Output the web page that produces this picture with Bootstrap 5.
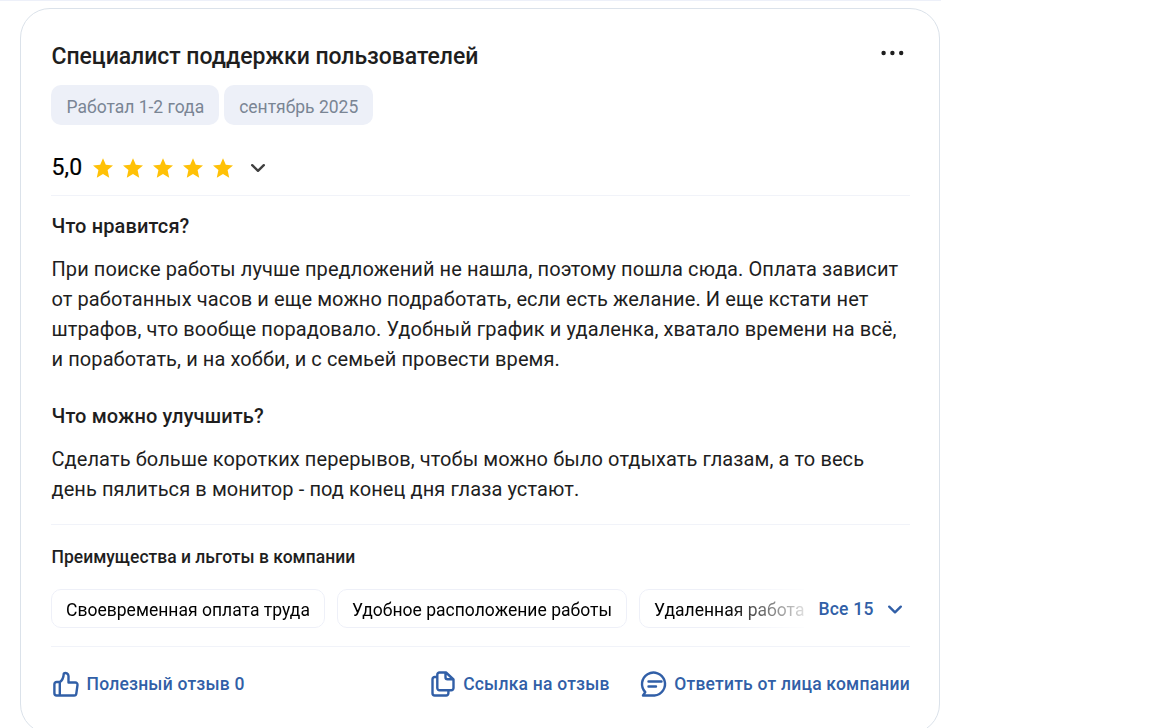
<!DOCTYPE html>
<html lang="ru">

<head>
    <meta charset="UTF-8">
    <meta name="viewport" content="width=device-width, initial-scale=1.0">
    <title>Отзыв о работе</title>

    <link href="https://cdn.jsdelivr.net/npm/bootstrap@5.3.3/dist/css/bootstrap.min.css" rel="stylesheet">
    <script src="https://cdn.jsdelivr.net/npm/bootstrap@5.3.3/dist/js/bootstrap.bundle.min.js"></script>

    <style>
        body {
            font-family: Roboto, "Liberation Sans", sans-serif;
            color: #1e1e1e;
            height: 728px;
            overflow: hidden;
        }

        .top-line {
            width: 941px;
            height: 1px;
            background-color: #edf0f9;
        }

        .review {
            width: 920px;
            height: 726px;
            margin: 7px 0 0 20px;
            padding: 32px 29px 0 30px;
            border: 1px solid #dbe2ea;
            border-radius: 30px;
        }

        .review-title {
            font-size: 23px;
            line-height: 32px;
            font-weight: 500;
            padding-left: 0.5px;
            letter-spacing: -0.04px;
        }

        .btn-dots {
            margin: 9px 5px 0 0;
            line-height: 0;
        }

        .chips {
            gap: 5px;
            margin-top: 12px;
        }

        .chip {
            height: 40px;
            line-height: 45px;
            padding: 0 14.5px 0 15.5px;
            border-radius: 10px;
            background-color: #edf0f8;
            color: #7a8594;
            font-size: 17.5px;
        }

        .rating {
            margin-top: 27px;
            height: 31px;
        }

        .rating-value {
            font-size: 23px;
            line-height: 31px;
            color: #000;
            width: 41px;
            padding-left: 0.5px;
            letter-spacing: 0.15px;
            -webkit-text-stroke: 0.2px #000;
        }

        .stars {
            gap: 8px;
        }

        .line {
            height: 1px;
            background-color: #f1f3f9;
        }

        .line-rating {
            margin-top: 12px;
        }

        .line-answers {
            margin-top: 20px;
        }

        .line-benefits {
            margin-top: 18px;
        }

        .question {
            font-size: 20px;
            line-height: 30px;
            font-weight: 500;
            letter-spacing: 0.12px;
            padding-left: 0.5px;
            margin: 15px 0 13px;
        }

        .answer {
            font-size: 20px;
            line-height: 30px;
            letter-spacing: 0.09px;
            padding-left: 0.5px;
            white-space: nowrap;
        }

        .answer + .question {
            margin-top: 27px;
        }

        .benefits-title {
            font-size: 17.5px;
            line-height: 26px;
            font-weight: 500;
            padding-left: 0.5px;
            margin: 19px 0;
        }

        .benefits {
            height: 39px;
        }

        .benefits-list {
            gap: 12px;
            width: 753px;
            -webkit-mask-image: linear-gradient(to right, #000 675px, transparent 765px);
            mask-image: linear-gradient(to right, #000 675px, transparent 765px);
        }

        .benefit {
            height: 39px;
            line-height: 41px;
            padding: 0 14px;
            border: 1px solid #eef0f8;
            border-radius: 10px;
            font-size: 17.5px;
            letter-spacing: 0.02px;
            color: #000;
            white-space: nowrap;
        }

        .action {
            gap: 5.5px;
            font-size: 17.5px;
            line-height: 26px;
            font-weight: 500;
            letter-spacing: 0.22px;
            color: #315fa7;
            text-decoration: none;
            white-space: nowrap;
        }

        .benefits-more {
            gap: 13px;
            margin-left: 14.5px;
            line-height: 28px;
        }

        .actions {
            margin-top: 22px;
        }

        .actions-right {
            gap: 29px;
        }
    </style>
</head>

<body class="bg-white">
    <div class="top-line"></div>

    <div class="review">
        <div class="d-flex justify-content-between">
            <h1 class="review-title mb-0">Специалист поддержки пользователей</h1>
            <a href="#" class="btn-dots" aria-label="Меню">
                <svg width="24" height="6" viewBox="0 0 24 6" fill="#1e1e1e">
                    <circle cx="2.6" cy="3" r="2.2" />
                    <circle cx="11.4" cy="3" r="2.2" />
                    <circle cx="20.2" cy="3" r="2.2" />
                </svg>
            </a>
        </div>

        <div class="d-flex chips">
            <div class="chip">Работал 1-2 года</div>
            <div class="chip">сентябрь 2025</div>
        </div>

        <div class="d-flex align-items-center rating">
            <div class="rating-value">5,0</div>
            <div class="d-flex stars" id="stars"></div>
            <svg class="ms-3" width="16" height="10" viewBox="0 0 16 10" fill="none" stroke="#404040"
                stroke-width="2.4" stroke-linecap="round" stroke-linejoin="round">
                <path d="M2.200 2.200 8 7.800l5.800-5.600" />
            </svg>
        </div>

        <div class="line line-rating"></div>

        <h2 class="question">Что нравится?</h2>
        <p class="answer mb-0">
            При поиске работы лучше предложений не нашла, поэтому пошла сюда. Оплата зависит<br>
            от работанных часов и еще можно подработать, если есть желание. И еще кстати нет<br>
            штрафов, что вообще порадовало. Удобный график и удаленка, хватало времени на всё,<br>
            и поработать, и на хобби, и с семьей провести время.
        </p>

        <h2 class="question">Что можно улучшить?</h2>
        <p class="answer mb-0">
            Сделать больше коротких перерывов, чтобы можно было отдыхать глазам, а то весь<br>
            день пялиться в монитор - под конец дня глаза устают.
        </p>

        <div class="line line-answers"></div>

        <h3 class="benefits-title">Преимущества и льготы в компании</h3>
        <div class="d-flex align-items-center benefits">
            <div class="d-flex overflow-hidden benefits-list">
                <div class="benefit">Своевременная оплата труда</div>
                <div class="benefit">Удобное расположение работы</div>
                <div class="benefit">Удаленная работа</div>
            </div>
            <a href="#" class="action benefits-more d-flex align-items-center">
                <span>Все 15</span>
                <svg width="16" height="10" viewBox="0 0 16 10" fill="none" stroke="#315fa7" stroke-width="2.4"
                    stroke-linecap="round" stroke-linejoin="round">
                    <path d="M2.200 2.700 8 8.300l5.800-5.600" />
                </svg>
            </a>
        </div>

        <div class="line line-benefits"></div>

        <div class="d-flex justify-content-between actions">
            <a href="#" class="action d-flex align-items-center">
                <svg width="30" height="30" viewBox="0 0 30 30" fill="none" stroke="#315fa7" stroke-width="2.4"
                    stroke-linecap="round" stroke-linejoin="round">
                    <path d="M8.800 13H5.600a2.200 2.200 0 0 0-2.200 2.200v9.100a2.200 2.200 0 0 0 2.200 2.200h17.500a2.200 2.200 0 0 0 2.200-1.900l1.200-8.600a2.200 2.200 0 0 0-2.200-2.500H17.500V7a3 3 0 0 0-4.700-2.400C12.500 8.500 11.500 11.500 8.800 13v13.500" />
                </svg>
                <span>Полезный отзыв 0</span>
            </a>
            <div class="d-flex actions-right">
                <a href="#" class="action d-flex align-items-center">
                    <svg width="30" height="30" viewBox="0 0 30 30" fill="none" stroke="#315fa7" stroke-width="2.4"
                        stroke-linecap="round" stroke-linejoin="round">
                        <path d="M18 3.500H11.500a2.200 2.200 0 0 0-2.200 2.200V19a2.200 2.200 0 0 0 2.200 2.200h11.800a2.200 2.200 0 0 0 2.200-2.200V10.500zM17.500 3.500v4.700a2 2 0 0 0 2 2h5M9 8H6.700A2.200 2.200 0 0 0 4.500 10.200v14.100a2.200 2.200 0 0 0 2.200 2.200h11.500a2.200 2.200 0 0 0 2.200-2.200v-2.500" />
                    </svg>
                    <span>Ссылка на отзыв</span>
                </a>
                <a href="#" class="action d-flex align-items-center">
                    <svg width="30" height="30" viewBox="0 0 30 30" fill="none" stroke="#315fa7" stroke-width="2.4"
                        stroke-linecap="round" stroke-linejoin="round">
                        <path d="M15.500 26.500H4l2.300-3.400A11.500 11.500 0 1 1 15.500 26.500zM9.500 12.500h13M9.500 17.500h7.500" />
                    </svg>
                    <span>Ответить от лица компании</span>
                </a>
            </div>
        </div>
    </div>

    <script>
        const stars = document.getElementById('stars');
        for (let i = 0; i < 5; i++) {
            stars.innerHTML += `
                <svg width="22" height="22" viewBox="0 0 22 22" fill="#ffc107">
                    <path d="M11 1.200l2.800 6.600 7.200.6-5.400 4.700 1.600 7.600L11 16.900l-6.200 3.800 1.600-7.600L1 8.400l7.200-.6z" />
                </svg>
            `;
        }
    </script>
</body>

</html>
